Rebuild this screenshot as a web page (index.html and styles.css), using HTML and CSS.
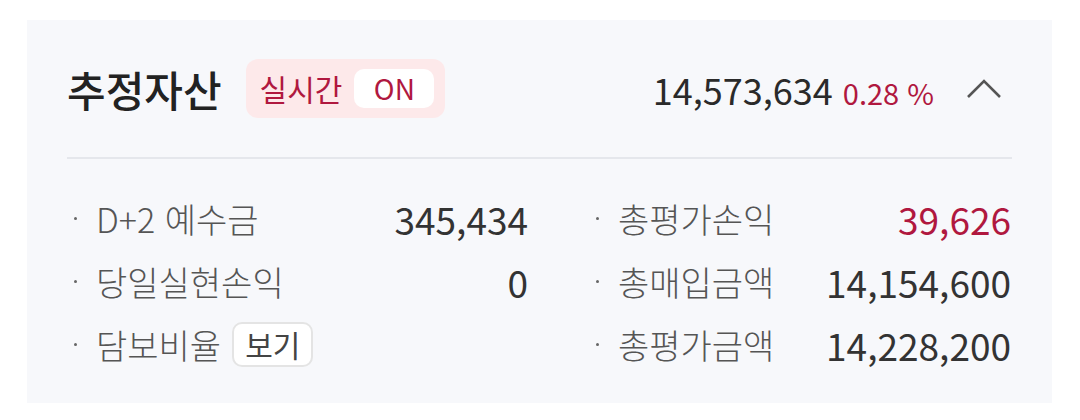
FILE: index.html
```html
<!DOCTYPE html>
<html lang="ko">
<head>
    <meta charset="UTF-8">
    <meta name="viewport" content="width=device-width, initial-scale=1.0">
    <title>추정자산</title>
    <link rel="stylesheet" href="styles.css">
</head>
<body>
    <!-- Estimated assets card -->
    <div class="asset-card">
        <div class="asset-head">
            <h1 class="asset-title">추정자산</h1>
            <div class="live-badge">
                <span class="live-label">실시간</span>
                <span class="live-toggle">ON</span>
            </div>
            <div class="asset-total">
                <span class="total-value">14,573,634</span>
                <span class="total-rate">0.28 %</span>
            </div>
            <button class="collapse-btn" aria-label="접기">
                <svg width="36" height="20" viewBox="0 0 36 20">
                    <polyline points="2,18 18,2 34,18" fill="none" stroke="#555" stroke-width="2.6"/>
                </svg>
            </button>
        </div>

        <div class="asset-grid">
            <div class="asset-row">
                <span class="row-label">D+2 예수금</span>
                <span class="row-value">345,434</span>
            </div>
            <div class="asset-row">
                <span class="row-label">총평가손익</span>
                <span class="row-value up">39,626</span>
            </div>
            <div class="asset-row">
                <span class="row-label">당일실현손익</span>
                <span class="row-value">0</span>
            </div>
            <div class="asset-row">
                <span class="row-label">총매입금액</span>
                <span class="row-value">14,154,600</span>
            </div>
            <div class="asset-row">
                <span class="row-label">담보비율 <button class="view-btn">보기</button></span>
                <span class="row-value"></span>
            </div>
            <div class="asset-row">
                <span class="row-label">총평가금액</span>
                <span class="row-value">14,228,200</span>
            </div>
        </div>
    </div>
</body>
</html>
```

FILE: styles.css
```css
/* General */
body {
    margin: 0;
    background-color: #fff;
    font-family: 'Noto Sans CJK KR', 'Noto Sans', sans-serif;
    color: #333;
}

/* Card */
.asset-card {
    width: 945px;
    height: 383px;
    margin: 20px 0 0 27px;
    padding: 0 40px;
    background-color: #f7f8fb;
}

/* Header */
.asset-head {
    display: flex;
    align-items: center;
    height: 137px;
    border-bottom: 2px solid #e5e7ec;
}

.asset-title {
    margin: 0;
    font-size: 42px;
    font-weight: 500;
    color: #222;
}

.live-badge {
    display: flex;
    align-items: center;
    gap: 12px;
    margin-left: 24px;
    padding: 10px 11px 10px 14px;
    background-color: #fde9ea;
    border-radius: 12px;
}

.live-label {
    font-size: 30px;
    line-height: 39px;
    color: #b0183f;
}

.live-toggle {
    width: 80px;
    text-align: center;
    font-size: 28px;
    line-height: 39px;
    color: #b0183f;
    background-color: #fff;
    border-radius: 10px;
}

.asset-total {
    margin-left: auto;
    display: flex;
    align-items: baseline;
    gap: 10px;
}

.total-value {
    font-size: 36px;
    color: #2a2a2a;
}

.total-rate {
    font-size: 29px;
    color: #b0183f;
}

.collapse-btn {
    display: flex;
    margin: 0 10px 0 32px;
    padding: 0;
    border: none;
    background: none;
}

/* Rows */
.asset-grid {
    display: grid;
    grid-template-columns: 461px 422px;
    column-gap: 61px;
    grid-auto-rows: 63px;
    padding-top: 28px;
}

.asset-row {
    display: flex;
    align-items: center;
    justify-content: space-between;
}

.row-label {
    display: flex;
    align-items: center;
    font-size: 34px;
    font-weight: 300;
    color: #555;
}

.row-label::before {
    content: '';
    width: 3px;
    height: 3px;
    margin: 0 19px 0 7px;
    border-radius: 50%;
    background-color: #666;
}

.row-value {
    font-size: 37px;
    color: #333;
}

.row-value.up {
    color: #b0183f;
}

.view-btn {
    margin-left: 11px;
    padding: 0 11px;
    font-family: inherit;
    font-size: 30px;
    line-height: 41px;
    color: #444;
    background-color: #fff;
    border: 2px solid #e4e4e4;
    border-radius: 10px;
}
```
